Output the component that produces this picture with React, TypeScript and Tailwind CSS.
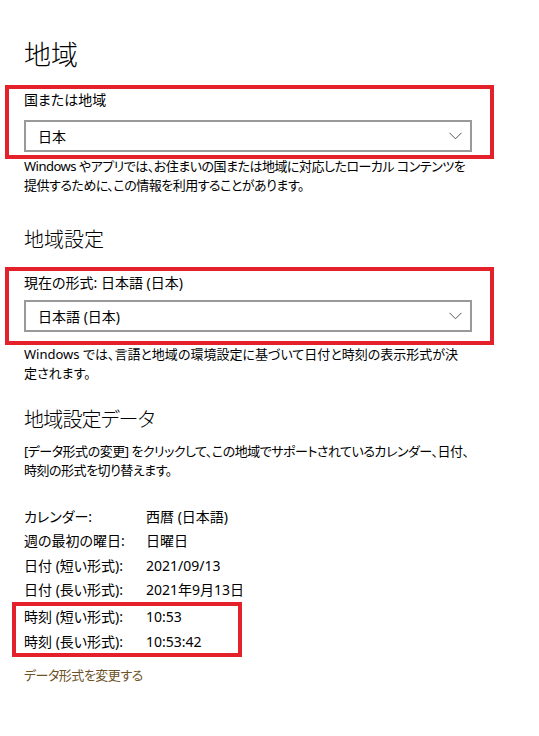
const FONT = "font-['Noto_Sans','Noto_Sans_CJK_JP',sans-serif] [font-feature-settings:'palt']"

const ROWS = [
  { label: 'カレンダー:', value: '西暦 (日本語)' },
  { label: '週の最初の曜日:', value: '日曜日' },
  { label: '日付 (短い形式):', value: '2021/09/13' },
  { label: '日付 (長い形式):', value: '2021年9月13日' },
]

const TIME_ROWS = [
  { label: '時刻 (短い形式):', value: '10:53' },
  { label: '時刻 (長い形式):', value: '10:53:42' },
]

function Chevron() {
  return (
    <svg width="13" height="8" viewBox="0 0 13 8" fill="none">
      <path d="M0.5 0.8 L6.5 6.8 L12.5 0.8" stroke="#555" strokeWidth="1" />
    </svg>
  )
}

function Dropdown({ value }: { value: string }) {
  return (
    <div className="flex h-8 w-[448px] items-center justify-between border-2 border-[#999] bg-white pl-[12px] pr-[8px] text-[14px] text-black">
      <span>{value}</span>
      <Chevron />
    </div>
  )
}

function Row({ label, value }: { label: string; value: string }) {
  return (
    <div className="flex h-[24.5px] items-center text-[14px] text-black">
      <span className="w-[122px] shrink-0">{label}</span>
      <span>{value}</span>
    </div>
  )
}

export default function App() {
  return (
    <div className={`${FONT} h-[736px] w-[539px] overflow-hidden bg-white text-black`}>
      {/* 地域 */}
      <h1 className="pl-6 pt-[37px] text-[27px] font-light leading-[36px]">地域</h1>

      <div className="ml-[5px] mt-[12px] w-[489px] border-4 border-[#e4202b] pb-[3px] pl-[15px] pt-[1px]">
        <div className="text-[14px] leading-5">国または地域</div>
        <div className="mt-[10px]">
          <Dropdown value="日本" />
        </div>
      </div>

      <p className="-mt-[2px] whitespace-nowrap px-6 text-[13px] leading-[19px] tracking-[-0.5px]">
        Windows やアプリでは、お住まいの国または地域に対応したローカル コンテンツを
        <br />
        提供するために、この情報を利用することがあります。
      </p>

      {/* 地域設定 */}
      <h2 className="mt-[31px] pl-6 text-[20px] font-light leading-[28px]">地域設定</h2>

      <div className="ml-[5px] mt-[13px] w-[489px] border-4 border-[#e4202b] pb-[9px] pl-[15px] pt-[2px]">
        <div className="text-[14px] leading-5">現在の形式: 日本語 (日本)</div>
        <div className="mt-[7px]">
          <Dropdown value="日本語 (日本)" />
        </div>
      </div>

      <p className="whitespace-nowrap px-6 text-[13px] leading-[19px] tracking-[0px]">
        Windows では、言語と地域の環境設定に基づいて日付と時刻の表示形式が決
        <br />
        定されます。
      </p>

      {/* 地域設定データ */}
      <h2 className="mt-[23px] pl-6 text-[20px] font-light leading-[28px] tracking-[-0.8px]">地域設定データ</h2>

      <p className="mt-[8px] whitespace-nowrap px-6 text-[13px] leading-[19px] tracking-[-0.5px]">
        [データ形式の変更] をクリックして、この地域でサポートされているカレンダー、日付、
        <br />
        時刻の形式を切り替えます。
      </p>

      <div className="mt-6 pl-6">
        {ROWS.map(r => (
          <Row key={r.label} label={r.label} value={r.value} />
        ))}
      </div>

      <div className="ml-[12px] flex w-[230px] flex-col gap-[5px] border-4 border-[#e4202b] pb-[2px] pl-[8px]">
        {TIME_ROWS.map(r => (
          <div key={r.label} className="flex h-[20px] items-center text-[14px]">
            <span className="w-[122px] shrink-0">{r.label}</span>
            <span>{r.value}</span>
          </div>
        ))}
      </div>

      <div className="mt-[8px] pl-6 text-[13px] leading-5 tracking-[-0.5px] text-[#6d5328]">データ形式を変更する</div>
    </div>
  )
}
